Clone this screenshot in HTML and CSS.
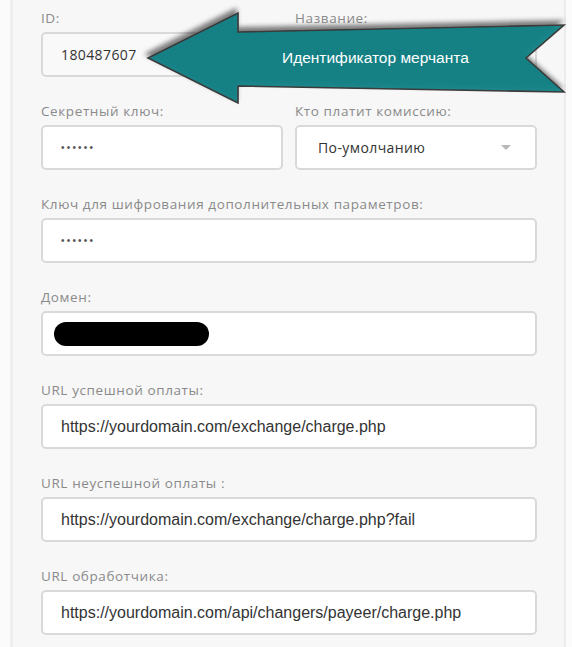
FILE: index.html
```html
<!DOCTYPE html>
<html lang="ru">
<head>
<meta charset="utf-8">
<link rel="stylesheet" href="styles.css">
</head>
<body>
<div class="page">
  <div class="panel">
    <div class="row two">
      <div class="field">
        <label class="label">ID:</label>
        <div class="input readonly geo">180487607</div>
      </div>
      <div class="field">
        <label class="label">Название:</label>
        <div class="input readonly geo">Merch Test Test</div>
      </div>
    </div>
    <div class="row two">
      <div class="field">
        <label class="label">Секретный ключ:</label>
        <div class="input dots">••••••</div>
      </div>
      <div class="field">
        <label class="label">Кто платит комиссию:</label>
        <div class="input select geo"><span>По-умолчанию</span><span class="caret"></span></div>
      </div>
    </div>
    <div class="row">
      <div class="field">
        <label class="label">Ключ для шифрования дополнительных параметров:</label>
        <div class="input dots">••••••</div>
      </div>
    </div>
    <div class="row">
      <div class="field">
        <label class="label">Домен:</label>
        <div class="input"><span class="redact"></span></div>
      </div>
    </div>
    <div class="row">
      <div class="field">
        <label class="label">URL успешной оплаты:</label>
        <div class="input">https://yourdomain.com/exchange/charge.php</div>
      </div>
    </div>
    <div class="row">
      <div class="field">
        <label class="label">URL неуспешной оплаты :</label>
        <div class="input">https://yourdomain.com/exchange/charge.php?fail</div>
      </div>
    </div>
    <div class="row">
      <div class="field">
        <label class="label">URL обработчика:</label>
        <div class="input">https://yourdomain.com/api/changers/payeer/charge.php</div>
      </div>
    </div>
  </div>
  <svg class="callout" width="572" height="120" viewBox="0 0 572 120">
    <defs>
      <filter id="sh" x="-10%" y="-40%" width="120%" height="180%">
        <feGaussianBlur in="SourceAlpha" stdDeviation="2.5"/>
        <feOffset dx="-2" dy="-4" result="b"/>
        <feComponentTransfer><feFuncA type="linear" slope="0.55"/></feComponentTransfer>
        <feMerge><feMergeNode/><feMergeNode in="SourceGraphic"/></feMerge>
      </filter>
    </defs>
    <path d="M148 58 L238 13 L238 32 L564 25 L526 58 L564 92 L238 86 L238 103 Z" fill="#0c7f83" fill-opacity="0.93" stroke="#3a3a3a" stroke-width="1.6" stroke-linejoin="miter" filter="url(#sh)"/>
    <text x="282" y="63" class="callout-text">Идентификатор мерчанта</text>
  </svg>
</div>
</body>
</html>
```
FILE: styles.css
```css
html, body {
  margin: 0;
  padding: 0;
  background: #fbfbfb;
}
.page {
  position: relative;
  width: 572px;
  height: 647px;
  overflow: hidden;
  padding-left: 10px;
  box-sizing: border-box;
}
.panel {
  width: 556px;
  box-sizing: border-box;
  background: #f7f7f7;
  border-left: 3px solid #eeeeee;
  border-right: 2px solid #ececec;
  padding: 8px 27px 0 28px;
  height: 647px;
  display: flex;
  flex-direction: column;
  gap: 24px;
}
.row {
  display: flex;
  gap: 12px;
}
.row.two .field {
  flex: 1 1 0;
}
.field {
  flex: 1;
  display: flex;
  flex-direction: column;
  gap: 4px;
}
.label {
  font-family: "Open Sans", sans-serif;
  font-size: 13.5px;
  letter-spacing: 0.6px;
  line-height: 20px;
  color: #8a8a8a;
  white-space: nowrap;
}
.input {
  height: 45px;
  box-sizing: border-box;
  border: 2px solid #d9d9d9;
  border-radius: 5px;
  background: #fff;
  padding: 0 18px;
  display: flex;
  align-items: center;
  font-family: "Liberation Sans", Arial, sans-serif;
  font-size: 16px;
  color: #333;
  white-space: nowrap;
  overflow: hidden;
}
.input.readonly {
  background: #f9f9f9;
}
.geo {
  font-family: "Open Sans", sans-serif;
  font-size: 14px;
  letter-spacing: 0.4px;
}
.dots {
  font-size: 10px;
  letter-spacing: 2.2px;
  color: #555;
}
.select {
  justify-content: space-between;
  padding: 0 24px 0 21px;
}
.caret {
  width: 0;
  height: 0;
  border-left: 5px solid transparent;
  border-right: 5px solid transparent;
  border-top: 5px solid #b8b8b8;
}
.redact {
  display: block;
  width: 155px;
  height: 24px;
  background: #000;
  border-radius: 12px;
  margin-left: -7px;
}
.callout {
  position: absolute;
  left: 0;
  top: 0;
}
.callout-text {
  font-family: "Liberation Sans", Arial, sans-serif;
  font-size: 15.5px;
  fill: #ffffff;
}
```
